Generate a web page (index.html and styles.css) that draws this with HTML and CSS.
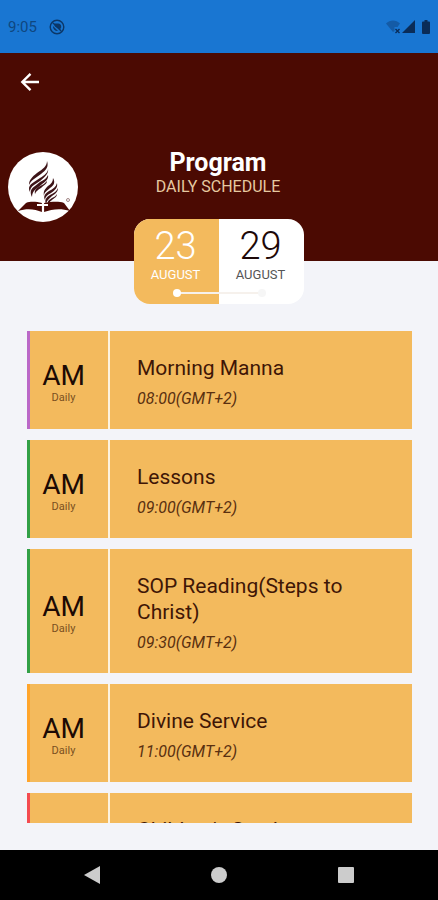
FILE: index.html
```html
<!DOCTYPE html>
<html lang="en">
<head>
    <meta charset="UTF-8">
    <meta name="viewport" content="width=device-width, initial-scale=1.0">
    <title>Program</title>
    <link rel="stylesheet" href="styles.css">
</head>
<body>
    <div class="app">
        <div class="status-bar">
            <span class="clock">9:05</span>
            <svg class="app-icon" width="16" height="16" viewBox="0 0 16 16" aria-hidden="true">
                <circle cx="8" cy="8" r="6.8" fill="none" stroke="#0c3767" stroke-width="1.4"/>
                <path d="M4.500 4.500h5a3 3 0 0 1 2 5v2.500L9 9.500 6 7.500zM4 7l5 5a4.500 4.500 0 0 1-5-5z" fill="#0c3767"/>
                <path d="M3.300 3.300 12.700 12.700" stroke="#0c3767" stroke-width="1.200"/>
            </svg>
            <div class="status-icons">
                <svg width="15" height="14" viewBox="0 0 15 14" aria-hidden="true">
                    <path d="M0 3.500C4-.5 10-.5 14 3.500L11.500 7H8.500v4L7 12z" fill="#145ba6"/>
                    <path d="M9.500 9l4 4M13.500 9l-4 4" stroke="#0a2c58" stroke-width="1.400"/>
                </svg>
                <svg width="13" height="13" viewBox="0 0 13 13" aria-hidden="true">
                    <path d="M13 0v13H0z" fill="#0a2c58"/>
                </svg>
                <svg class="battery" width="8" height="14" viewBox="0 0 8 14" aria-hidden="true">
                    <path d="M2.500 0h3v1.400H7a1 1 0 0 1 1 1V13a1 1 0 0 1-1 1H1a1 1 0 0 1-1-1V2.400a1 1 0 0 1 1-1h1.500z" fill="#0a2c58"/>
                </svg>
            </div>
        </div>

        <header class="header">
            <button type="button" class="back-btn" aria-label="Back">
                <svg width="20" height="20" viewBox="0 0 20 20" fill="none" stroke="#fff" stroke-width="2.400" aria-hidden="true">
                    <path d="M19 10H3M10.500 1.800 2.300 10l8.200 8.200"/>
                </svg>
            </button>
            <div class="title-row">
                <svg class="logo" width="70" height="70" viewBox="0 0 70 70" aria-hidden="true">
                    <circle cx="35" cy="35" r="35" fill="#fff"/>
                    <g fill="#3d1418">
                        <path d="M39 9c2 6-1 9-6 13l-7 5c-3 2-4 4-5 6 0-5 3-8 8-12 6-4 10-7 10-12z"/>
                        <path d="M40 17c1 4-3 8-8 12l-6 4c-3 2-4 4-4 7-2-4-1-7 4-10l6-4c5-3 8-6 8-9z"/>
                        <path d="M40 23c1 4-3 7-7 10l-5 4c-3 2-4 5-4 8-2-4-2-8 3-11l5-4c4-2 7-4 8-7z"/>
                        <path d="M39 29c0 3-3 4-6 7-3 2-5 3-6 6-1-4 2-6 5-8 3-1 5-3 7-5z"/>
                        <path d="M45 26c3 5 0 8-3 10-3 3-6 4-6 8-1-5 1-7 4-10 3-2 5-4 5-8z"/>
                        <path d="M49 31c1 5-2 7-6 10-4 2-6 4-6 7-2-4 0-6 4-9 4-2 7-4 8-8z"/>
                        <path d="M50 36c0 4-3 6-6 8-3 3-5 4-6 8-2-5 1-7 4-9 4-2 7-4 8-7z"/>
                        <path d="M49 42c0 3-3 4-5 6-2 1-3 3-4 5-1-4 1-5 4-7 2-1 4-2 5-4z"/>
                    </g>
                    <path d="M10 59l8-8c5-2 11-1 16 0v9c-7-3-15-4-24-1zM62 59l-6-8c-6-2-13-1-20 0v9c8-3 17-4 26-1z" fill="#4b0a05"/>
                    <path d="M35 49v16M29 53h11" fill="none" stroke="#fff" stroke-width="2.200"/>
                    <circle cx="60" cy="48" r="1.500" fill="none" stroke="#a08585"/>
                </svg>
                <div class="title-text">
                    <h1>Program</h1>
                    <p>DAILY SCHEDULE</p>
                </div>
            </div>
        </header>

        <div class="dates">
            <button type="button" class="date active">
                <span class="day">23</span>
                <span class="month">AUGUST</span>
            </button>
            <button type="button" class="date">
                <span class="day">29</span>
                <span class="month">AUGUST</span>
            </button>
            <div class="date-line"></div>
        </div>

        <main class="schedule">
            <article class="event purple">
                <div class="period"><span class="ampm">AM</span><span class="repeat">Daily</span></div>
                <div class="details">
                    <h2>Morning Manna</h2>
                    <p>08:00(GMT+2)</p>
                </div>
            </article>
            <article class="event green">
                <div class="period"><span class="ampm">AM</span><span class="repeat">Daily</span></div>
                <div class="details">
                    <h2>Lessons</h2>
                    <p>09:00(GMT+2)</p>
                </div>
            </article>
            <article class="event green">
                <div class="period"><span class="ampm">AM</span><span class="repeat">Daily</span></div>
                <div class="details">
                    <h2>SOP Reading(Steps to Christ)</h2>
                    <p>09:30(GMT+2)</p>
                </div>
            </article>
            <article class="event orange">
                <div class="period"><span class="ampm">AM</span><span class="repeat">Daily</span></div>
                <div class="details">
                    <h2>Divine Service</h2>
                    <p>11:00(GMT+2)</p>
                </div>
            </article>
            <article class="event red">
                <div class="period"></div>
                <div class="details">
                    <h2>Children's Service</h2>
                </div>
            </article>
        </main>

        <nav class="nav-bar">
            <button type="button" aria-label="Back">
                <svg width="18" height="20" viewBox="0 0 18 20" aria-hidden="true"><path d="M17 1v18L1 10z" fill="#ccc"/></svg>
            </button>
            <button type="button" aria-label="Home">
                <svg width="18" height="18" viewBox="0 0 18 18" aria-hidden="true"><circle cx="9" cy="9" r="8" fill="#ccc"/></svg>
            </button>
            <button type="button" aria-label="Recent apps">
                <svg width="18" height="18" viewBox="0 0 18 18" aria-hidden="true"><rect x="1" y="1" width="16" height="16" rx="1" fill="#ccc"/></svg>
            </button>
        </nav>
    </div>
</body>
</html>
```
FILE: styles.css
```css
* {
    box-sizing: border-box;
}

body {
    margin: 0;
    font-family: Roboto, Arial, sans-serif;
    background-color: #f3f4f9;
}

h1,
h2,
p {
    margin: 0;
    font-weight: 400;
}

button {
    border: none;
    padding: 0;
    background: none;
    font-family: inherit;
    cursor: pointer;
}

svg {
    display: block;
}

.app {
    height: 100vh;
    display: flex;
    flex-direction: column;
}

/* Status bar */
.status-bar {
    flex: none;
    display: flex;
    align-items: center;
    gap: 12px;
    height: 53px;
    padding: 0 8px;
    background-color: #1976d2;
}

.clock {
    font-size: 15px;
    color: #0f4780;
}

.status-icons {
    display: flex;
    align-items: center;
    gap: 1px;
    margin-left: auto;
}

.battery {
    margin-left: 6px;
}

/* Header */
.header {
    flex: none;
    height: 208px;
    padding: 19px 8px 0;
    background-color: #4b0a02;
}

.back-btn {
    display: block;
    margin-left: 12px;
}

.title-row {
    display: grid;
    grid-template-columns: 70px 1fr 72px;
    align-items: center;
    margin-top: 57px;
}

.title-text {
    text-align: center;
    margin-bottom: 28px;
}

.title-text h1 {
    font-size: 25px;
    line-height: 28px;
    font-weight: 700;
    color: #fff;
}

.title-text p {
    font-size: 16px;
    line-height: 20px;
    color: #e6c9a0;
}

/* Date switcher */
.dates {
    flex: none;
    position: relative;
    display: flex;
    width: 170px;
    height: 85px;
    margin: -42px auto 0;
    border-radius: 16px;
    background-color: #fff;
    overflow: hidden;
}

.date {
    flex: 1;
    display: flex;
    flex-direction: column;
    align-items: center;
    padding: 7px 2px 0 0;
    color: #555;
}

.date.active {
    background-color: #f3ba5d;
    color: #fff;
}

.day {
    font-size: 38px;
    line-height: 41px;
    font-weight: 300;
    color: #1d0808;
}

.active .day {
    color: #fff;
}

.month {
    font-size: 13px;
    line-height: 16px;
}

.date-line {
    position: absolute;
    left: 25%;
    right: 25%;
    bottom: 10px;
    height: 2px;
    background-color: #f6f1ec;
}

.date-line::before,
.date-line::after {
    content: "";
    position: absolute;
    top: -3px;
    left: -4px;
    width: 8px;
    height: 8px;
    border-radius: 50%;
    background-color: #fff;
}

.date-line::after {
    left: auto;
    right: -4px;
    background-color: #f6f6f6;
}

/* Schedule */
.schedule {
    flex: 1;
    min-height: 0;
    display: flex;
    flex-direction: column;
    gap: 11px;
    margin: 27px 26px 27px 27px;
    overflow: hidden;
}

.event {
    flex: none;
    display: flex;
    border-left: 3px solid;
    background-color: #f3ba5d;
}

.purple {
    border-color: #ba68c8;
}

.green {
    border-color: #32a047;
}

.orange {
    border-color: #ffa52c;
}

.red {
    border-color: #f44b50;
}

.period {
    flex: none;
    display: flex;
    flex-direction: column;
    align-items: center;
    justify-content: center;
    width: 80px;
    padding: 4px 11px 0 0;
    border-right: 2px solid #fdf3df;
    color: #1c0a04;
}

.ampm {
    font-size: 28px;
    line-height: 32px;
}

.repeat {
    font-size: 11px;
    line-height: 12px;
    color: #7a501f;
}

.details {
    flex: 1;
    padding: 24px 27px 21px;
}

.details h2 {
    font-size: 21px;
    line-height: 26px;
    color: #3f1606;
}

.details p {
    margin-top: 9px;
    font-size: 16px;
    line-height: 18px;
    font-style: italic;
    color: #5a3010;
}

/* Navigation bar */
.nav-bar {
    flex: none;
    display: flex;
    align-items: center;
    justify-content: space-between;
    height: 50px;
    padding: 0 83px;
    background-color: #000;
}
```
